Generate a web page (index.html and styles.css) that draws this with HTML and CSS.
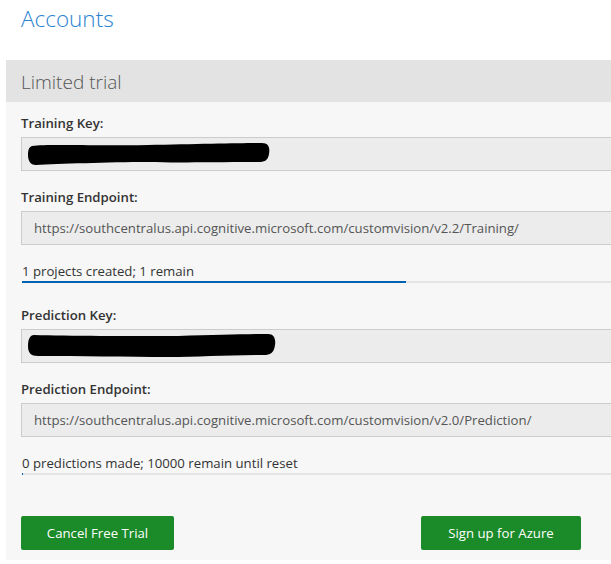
FILE: index.html
```html
<!DOCTYPE html>
<html lang="en">
<head>
<meta charset="utf-8">
<title>Accounts</title>
<link rel="stylesheet" href="styles.css">
</head>
<body>
  <h1 class="page-title">Accounts</h1>
  <section class="panel">
    <div class="panel-head">Limited trial</div>
    <div class="panel-body">
      <div class="field">
        <div class="field-label">Training Key:</div>
        <div class="field-input">
          <svg class="redact" width="242" height="24" viewBox="0 0 242 24"><path d="M4 4 C20 2 60 4 120 3 C170 2 220 1 234 1 C241 1 242 6 241 12 C240 19 236 20 230 20 C180 20 150 21 120 20 C80 20 30 22 8 23 C2 23 0 18 0 13 C0 8 1 5 4 4 Z" fill="#000"/></svg>
        </div>
      </div>
      <div class="field">
        <div class="field-label">Training Endpoint:</div>
        <div class="field-input"><span class="field-value">https://southcentralus.api.cognitive.microsoft.com/customvision/v2.2/Training/</span></div>
      </div>
      <div class="usage">
        <div class="usage-text">1 projects created; 1 remain</div>
        <div class="usage-track"><div class="usage-fill" style="width:384px"></div></div>
      </div>

      <div class="field">
        <div class="field-label">Prediction Key:</div>
        <div class="field-input">
          <svg class="redact" width="248" height="26" viewBox="0 0 248 26"><path d="M6 2 C40 3 100 3 150 3 C190 2 220 1 240 1 C246 1 248 6 247 12 C246 20 242 22 236 22 C200 22 170 24 140 24 C100 24 50 23 10 23 C3 23 0 20 0 13 C0 6 2 2 6 2 Z" fill="#000"/></svg>
        </div>
      </div>
      <div class="field">
        <div class="field-label">Prediction Endpoint:</div>
        <div class="field-input"><span class="field-value">https://southcentralus.api.cognitive.microsoft.com/customvision/v2.0/Prediction/</span></div>
      </div>
      <div class="usage">
        <div class="usage-text">0 predictions made; 10000 remain until reset</div>
        <div class="usage-track"><div class="usage-fill" style="width:1px"></div></div>
      </div>

      <div class="actions">
        <button class="btn btn-cancel">Cancel Free Trial</button>
        <button class="btn btn-azure">Sign up for Azure</button>
      </div>
    </div>
  </section>
</body>
</html>
```

FILE: styles.css
```css
html {
  overflow: hidden;
}
html, body {
  margin: 0;
  padding: 0;
  background: #ffffff;
}
body {
  font-family: "Open Sans", "Noto Sans", sans-serif;
  font-size: 13.2px;
  color: #333333;
}
.page-title {
  margin: 0;
  padding: 1px 0 0 21px;
  height: 60px;
  box-sizing: border-box;
  font-size: 22.5px;
  font-weight: 300;
  line-height: 36px;
  color: #2a82d1;
}
.panel {
  margin-left: 6px;
}
.panel-head {
  height: 42px;
  background: #e3e3e3;
  padding-left: 15px;
  font-size: 19px;
  font-weight: 300;
  line-height: 44px;
  color: #555555;
}
.panel-body {
  background: #f7f7f7;
  padding: 11px 0 0 15px;
  height: 458px;
  box-sizing: border-box;
}
.field {
  margin-bottom: 16px;
}
.field-label {
  font-weight: 600;
  line-height: 20px;
  color: #333333;
}
.field-input {
  margin-top: 4px;
  height: 34px;
  box-sizing: border-box;
  border: 1px solid #cccccc;
  border-right: none;
  background: #ececec;
  display: flex;
  align-items: center;
  padding-left: 12px;
  overflow: hidden;
}
.field-value {
  color: #555555;
  white-space: nowrap;
}
.redact {
  display: block;
  margin-left: -6px;
}
.usage {
  margin-bottom: 22px;
}
.usage-text {
  line-height: 20px;
  color: #333333;
  padding-left: 1px;
}
.usage-track {
  height: 2px;
  background: #e4e4e4;
  margin-left: 1px;
}
.usage-fill {
  height: 2px;
  background: #0063b1;
}
.actions {
  display: flex;
  margin-top: 41px;
}
.btn {
  height: 34px;
  padding: 0;
  border: none;
  border-radius: 2px;
  background: #1b8a29;
  color: #ffffff;
  font-family: "Open Sans", "Noto Sans", sans-serif;
  font-size: 13.2px;
  text-align: center;
  cursor: pointer;
}
.btn-cancel {
  width: 153px;
}
.btn-azure {
  width: 160px;
  margin-left: 247px;
}
```
